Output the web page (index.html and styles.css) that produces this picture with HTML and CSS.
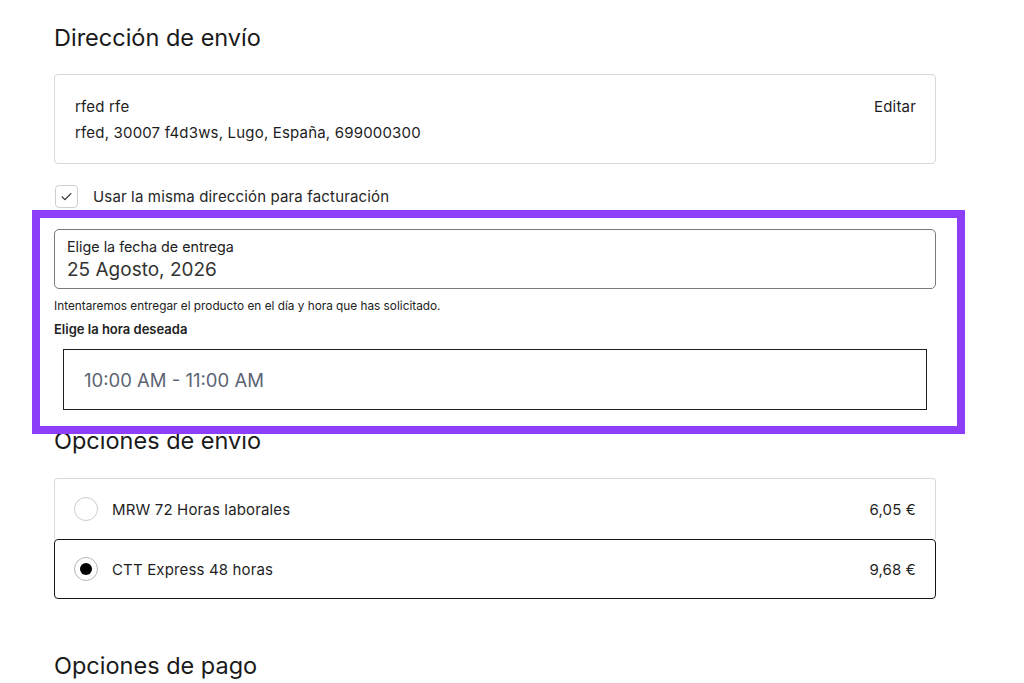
FILE: index.html
```html
<!DOCTYPE html>
<html lang="es">
<head>
<meta charset="utf-8">
<title>Checkout</title>
<link rel="stylesheet" href="styles.css">
</head>
<body>
<main class="checkout">
  <section class="block">
    <h2 class="title">Dirección de envío</h2>
    <div class="address-card">
      <div class="address-text">
        <div class="addr-name">rfed rfe</div>
        <div class="addr-line">rfed, 30007 f4d3ws, Lugo, España, 699000300</div>
      </div>
      <a class="edit-link">Editar</a>
    </div>
    <label class="check-row">
      <span class="checkbox">
        <svg viewBox="0 0 24 24" width="15" height="15"><path d="M5 12.5l4.5 4.5L19 7.5" fill="none" stroke="#222" stroke-width="1.8" stroke-linecap="round" stroke-linejoin="round"/></svg>
      </span>
      <span class="check-label">Usar la misma dirección para facturación</span>
    </label>
  </section>

  <section class="delivery">
    <div class="date-field">
      <div class="date-label">Elige la fecha de entrega</div>
      <div class="date-value">25 Agosto, 2026</div>
    </div>
    <p class="hint">Intentaremos entregar el producto en el día y hora que has solicitado.</p>
    <div class="time-label">Elige la hora deseada</div>
    <div class="time-box">10:00 AM - 11:00 AM</div>
  </section>

  <section class="block">
    <h2 class="title title-ship">Opciones de envío</h2>
    <div class="options">
      <div class="option">
        <span class="radio"></span>
        <span class="opt-name">MRW 72 Horas laborales</span>
        <span class="opt-price">6,05 €</span>
      </div>
      <div class="option selected">
        <span class="radio on"></span>
        <span class="opt-name">CTT Express 48 horas</span>
        <span class="opt-price">9,68 €</span>
      </div>
    </div>
  </section>

  <section class="block">
    <h2 class="title title-pay">Opciones de pago</h2>
  </section>
</main>
</body>
</html>
```

FILE: styles.css
```css
* { box-sizing: border-box; }

html, body {
  margin: 0;
  padding: 0;
  background: #ffffff;
  overflow: hidden;
}

body {
  font-family: Inter, "Noto Sans", sans-serif;
  color: #1d1d1f;
  width: 1024px;
  height: 683px;
}

.checkout {
  width: 882px;
  margin-left: 54px;
  padding-top: 23px;
  display: flex;
  flex-direction: column;
}

.title {
  margin: 0;
  font-size: 23.5px;
  line-height: 30px;
  font-weight: 400;
  color: #1a1a1a;
}

/* address */
.address-card {
  margin-top: 21px;
  height: 90px;
  border: 1px solid #d9d9d9;
  border-radius: 4px;
  padding: 19px 19px 0 20px;
  display: flex;
  justify-content: space-between;
  align-items: flex-start;
  font-size: 15px;
  line-height: 26px;
  letter-spacing: 0.18px;
}

.edit-link {
  color: #1d1d1f;
  cursor: pointer;
}

.check-row {
  margin-top: 21px;
  display: flex;
  align-items: center;
  gap: 15px;
  font-size: 15px;
  letter-spacing: 0.15px;
}

.checkbox {
  width: 23px;
  height: 23px;
  margin-left: 1px;
  border: 1px solid #cfcfcf;
  border-radius: 4px;
  display: flex;
  align-items: center;
  justify-content: center;
}

.check-label {
  color: #262626;
}

/* delivery date / time */
.delivery {
  position: relative;
  margin-top: 21px;
  display: flex;
  flex-direction: column;
}

.delivery::before {
  content: "";
  position: absolute;
  top: -19px;
  left: -22px;
  right: -29px;
  bottom: -24px;
  border: 8px solid #8c3ef8;
  pointer-events: none;
}

.date-field {
  height: 60px;
  border: 1px solid #7a7a7a;
  border-radius: 5px;
  padding: 6px 12px 0;
}

.date-label {
  font-size: 14.3px;
  line-height: 21px;
  color: #222;
}

.date-value {
  font-size: 19px;
  line-height: 25px;
  color: #333;
}

.hint {
  margin: 9px 0 0;
  font-size: 11.8px;
  line-height: 17px;
  color: #222;
}

.time-label {
  margin-top: 5px;
  font-size: 13px;
  line-height: 18px;
  font-weight: 600;
  color: #222;
}

.time-box {
  margin: 11px 9px 0;
  height: 61px;
  border: 1.5px solid #1f1f1f;
  padding-left: 20px;
  display: flex;
  align-items: center;
  font-size: 18.5px;
  color: #5c6472;
}

/* shipping */
.title-ship {
  margin-top: 16px;
}

.options {
  margin-top: 22px;
  display: flex;
  flex-direction: column;
  border-radius: 4px;
  letter-spacing: 0.15px;
}

.option {
  height: 61px;
  display: flex;
  align-items: center;
  padding: 0 19px 0 19px;
  font-size: 15px;
  border: 1px solid #d9d9d9;
  border-bottom: none;
  border-radius: 4px 4px 0 0;
}

.option.selected {
  height: 60px;
  border: 1.5px solid #161616;
  border-radius: 4px;
}

.radio {
  width: 24px;
  height: 24px;
  border: 1px solid #cccccc;
  border-radius: 50%;
  margin-right: 14px;
  display: flex;
  align-items: center;
  justify-content: center;
  flex: none;
}

.radio.on {
  border-color: #b5b5b5;
}

.radio.on::after {
  content: "";
  width: 12px;
  height: 12px;
  border-radius: 50%;
  background: #000;
}

.opt-name {
  flex: 1;
  color: #1f1f1f;
}

.opt-price {
  color: #1f1f1f;
}

.title-pay {
  margin-top: 52px;
}
```
